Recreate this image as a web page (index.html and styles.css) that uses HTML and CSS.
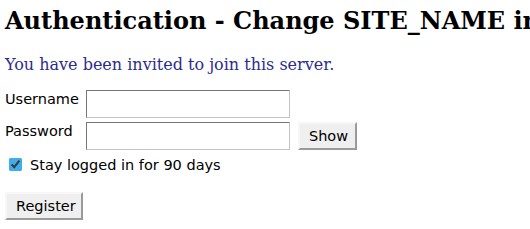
FILE: index.html
```html
<!DOCTYPE html>
<html lang="en">
<head>
    <meta charset="UTF-8">
    <meta name="viewport" content="width=device-width, initial-scale=1.0">
    <link rel="stylesheet" href="styles.css">
    <title>Authentication</title>
</head>
<body>
    <h2 class="page-title">Authentication - Change SITE_NAME in config</h2>
    <p class="invite">You have been invited to join this server.</p>
    <form class="auth-form" onsubmit="return false">
        <div class="fields">
            <label for="username">Username</label>
            <input id="username" type="text" class="text-input">
            <span></span>
            <label for="password">Password</label>
            <input id="password" type="password" class="text-input">
            <button type="button" class="btn" id="showBtn">Show</button>
        </div>
        <label class="remember">
            <input type="checkbox" checked>
            <span>Stay logged in for 90 days</span>
        </label>
        <button type="submit" class="btn register">Register</button>
    </form>
    <script>
document.getElementById('showBtn').addEventListener('click', () => {
    const pw = document.getElementById('password');
    pw.type = pw.type === 'password' ? 'text' : 'password';
});
    </script>
</body>
</html>
```

FILE: styles.css
```css
body {
    margin: 0;
    padding: 6px 5px;
    background: #fff;
    color: #000;
    font-family: "DejaVu Serif", serif;
    overflow: hidden;
}

.page-title {
    margin: 0;
    font-size: 24px;
    font-weight: bold;
    white-space: nowrap;
}

.invite {
    margin: 20px 0 0;
    font-size: 16px;
    color: #2c2c8e;
}

.auth-form {
    margin-top: 16px;
    font-family: "DejaVu Sans", sans-serif;
    font-size: 14.5px;
}

.fields {
    display: grid;
    grid-template-columns: auto 204px auto;
    column-gap: 7px;
    row-gap: 4px;
    align-items: start;
    justify-content: start;
}

.fields label {
    padding-top: 1px;
}

.fields .btn {
    margin-left: 1px;
}

.text-input {
    box-sizing: border-box;
    width: 204px;
    height: 28px;
    margin: 0;
    border: 1px solid;
    border-color: #777 #c4c4c4 #c4c4c4 #777;
    background: #fff;
    font: inherit;
}

.btn {
    box-sizing: border-box;
    height: 28px;
    margin: 0;
    padding: 0 9px;
    background: #efefef;
    border: 2px solid;
    border-color: #f7f7f7 #9a9a9a #9a9a9a #f7f7f7;
    font-family: "DejaVu Sans", sans-serif;
    font-size: 14.5px;
    color: #000;
    cursor: pointer;
}

#showBtn {
    width: 59px;
}

.remember {
    display: flex;
    align-items: center;
    margin-top: 5px;
}

.remember input {
    width: 13px;
    height: 13px;
    margin: 3px 8px 3px 4px;
    accent-color: #3daee9;
}

.register {
    width: 78px;
    margin-top: 18px;
}
```
